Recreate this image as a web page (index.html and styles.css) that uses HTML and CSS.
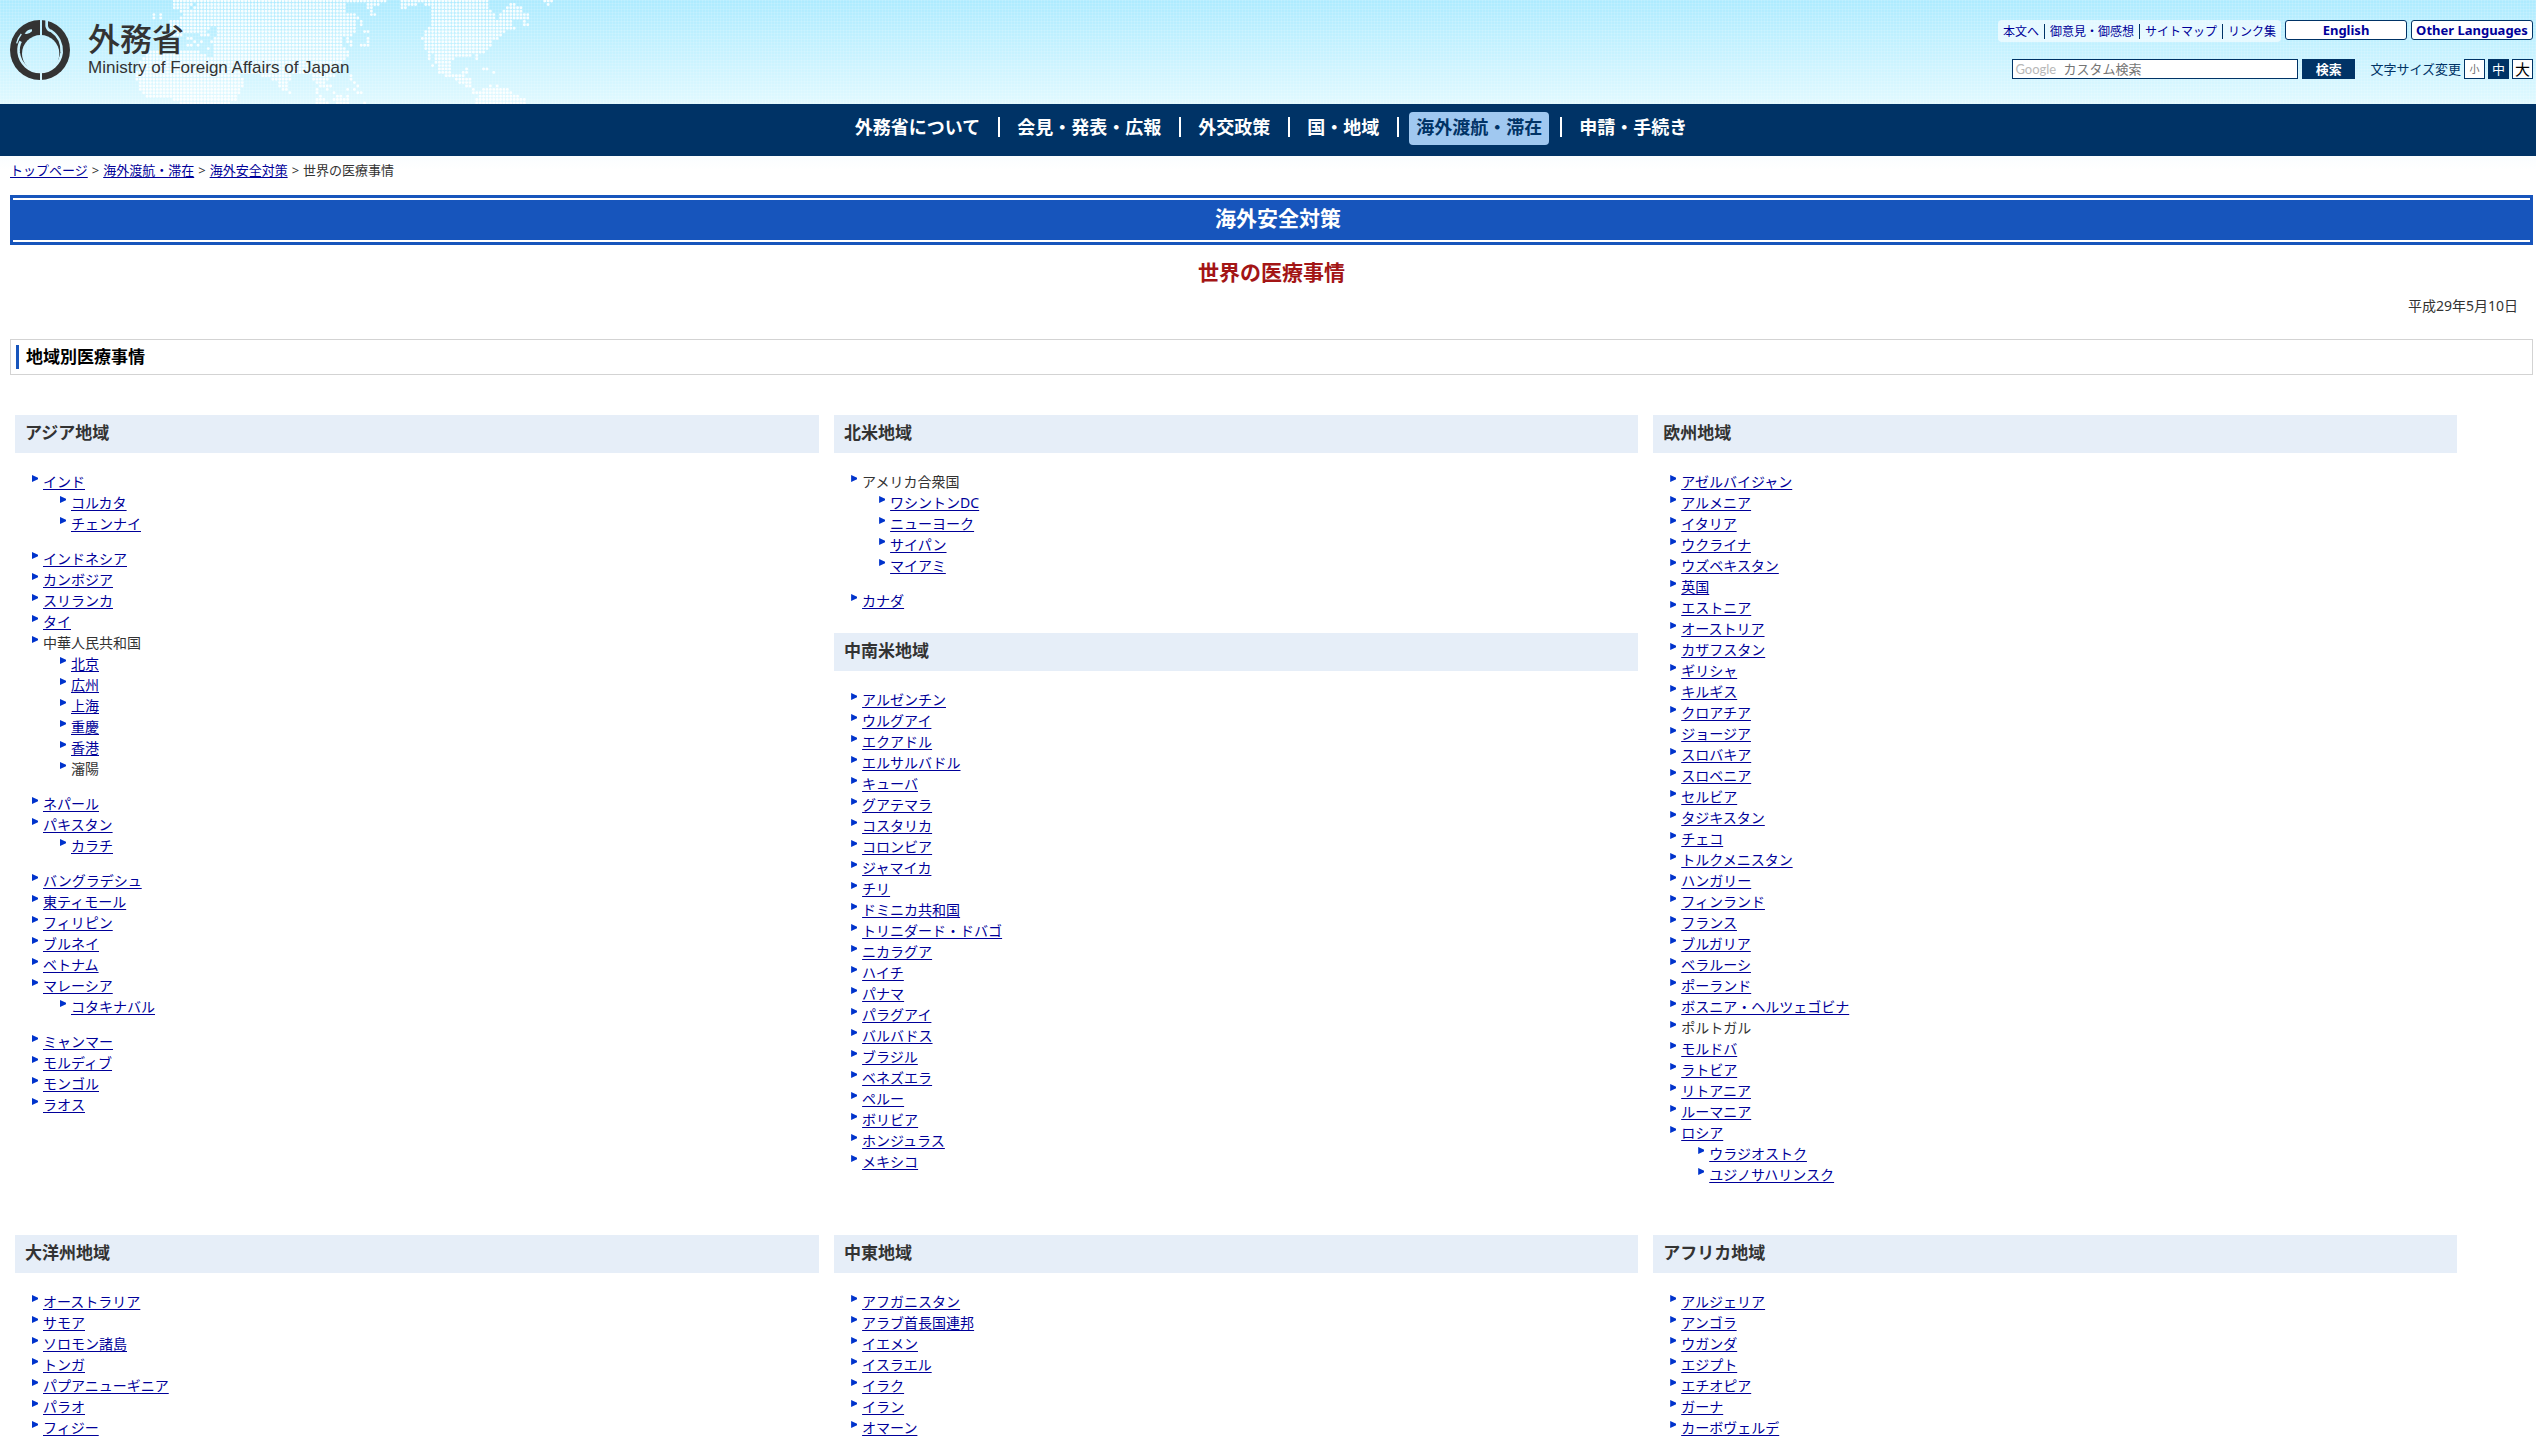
FILE: index.html
```html
<!DOCTYPE html>
<html lang="ja">
<head>
<meta charset="utf-8">
<title>世界の医療事情 | 外務省</title>
<link rel="stylesheet" href="styles.css">
</head>
<body>
<header class="site-header">
  <svg class="map" width="440" height="104" viewBox="0 0 129.4 30.6" aria-hidden="true">
    <path d="M13 .3H75.1M80 .3H105.1M122 .3H124.1
M13 1.3H18.1M20 1.3H63.1M70 1.3H73.1M80 1.3H84.1M87 1.3H105.1M112 1.3H113.1M123 1.3h.1
M13 2.3H17.1M19 2.3H63.1M70 2.3H71.1M80 2.3H81.1M89 2.3H105.1M111 2.3H115.1
M15 3.3H17.1M18 3.3H63.1M71 3.3h.1M89 3.3H106.1M110 3.3H115.1
M7 4.3h.1M9 4.3h.1M16 4.3H66.1M71 4.3H72.1M89 4.3H107.1M109 4.3H117.1
M7 5.3h.1M9 5.3h.1M15 5.3H67.1M89 5.3H107.1M109 5.3H117.1
M12 6.3H66.1M68 6.3h.1M89 6.3H112.1M116 6.3h.1
M12 7.3H66.1M68 7.3h.1M89 7.3H112.1M116 7.3H117.1
M12 8.3H23.1M26 8.3H66.1M88 8.3H113.1
M13 9.3H22.1M26 9.3H66.1M69 9.3H70.1M87 9.3H110.1
M12 10.3H15.1M21 10.3H23.1M26 10.3H65.1M87 10.3H109.1
M17 11.3H18.1M25 11.3H62.1M64 11.3h.1M70 11.3h.1M86 11.3H108.1
M19 12.3h.1M21 12.3h.1M24 12.3H62.1M64 12.3H65.1M70 12.3h.1M87 12.3H106.1
M17 13.3H18.1M20 13.3h.1M25 13.3H62.1M65 13.3h.1M68 13.3H70.1M87 13.3H106.1
M23 14.3h.1M25 14.3H63.1M87 14.3H105.1
M5 15.3H10.1M12 15.3H20.1M25 15.3H64.1M88 15.3H104.1
M5 16.3H22.1M25 16.3H64.1M88 16.3h.1M90 16.3H100.1M102 16.3h.1
M4 17.3H63.1M88 17.3h.1M90 17.3H95.1M102 17.3h.1
M3 18.3H62.1M90 18.3H94.1
M3 19.3H61.1M89 19.3h.1M91 19.3H94.1
M3 20.3H60.1M91 20.3H94.1M99 20.3h.1M104 20.3H105.1
M2 21.3H59.1M91 21.3H94.1M98 21.3H99.1M107 21.3h.1
M2 22.3H32.1M39 22.3H47.1M54 22.3H60.1M65 22.3h.1M93 22.3H98.1
M2 23.3H33.1M42 23.3H47.1M54 23.3H58.1M65 23.3h.1M96 23.3H100.1
M3 24.3H33.1M44 24.3H46.1M55 24.3H57.1M66 24.3h.1M97 24.3H100.1
M3 25.3H33.1M44 25.3H46.1M56 25.3H59.1M67 25.3h.1M99 25.3H100.1M106 25.3h.1M108 25.3h.1
M3 26.3H32.1M45 26.3H46.1M55 26.3h.1M58 26.3h.1M64 26.3h.1M66 26.3h.1M101 26.3h.1M104 26.3H111.1
M4 27.3H32.1M47 27.3h.1M55 27.3h.1M60 27.3h.1M67 27.3H68.1M101 27.3H112.1
M5 28.3H31.1M56 28.3h.1M61 28.3H62.1M64 28.3h.1M103 28.3H114.1
M13 29.3H31.1M55 29.3H57.1M60 29.3H64.1M102 29.3H116.1
M15 30.3H29.1M55 30.3H58.1M61 30.3H64.1M69 30.3h.1M102 30.3H116.1"/>
  </svg>
  <a class="brand" href="#">
    <svg class="emblem" width="60" height="60" viewBox="0 0 180 180" aria-hidden="true">
      <mask id="cut">
        <rect width="180" height="180" fill="#fff"/>
        <circle cx="92" cy="101" r="56"/>
        <path d="M93 0V180" stroke="#000" stroke-width="6"/>
        <path d="M110 0V18Q112 30 124 33A67 71 0 0 1 155 98A65 66 0 0 1 26 98Q24 78 32 64" fill="none" stroke="#000" stroke-width="8"/>
        <path d="M44 41Q52 28 66 28L66 34Q58 42 50 42Z"/>
        <path d="M20 70Q25 52 34 42" fill="none" stroke="#000" stroke-width="4"/>
      </mask>
      <circle cx="90" cy="90" r="90" fill="#333" mask="url(#cut)"/>
    </svg>
    <span class="brand-names">
      <span class="brand-ja">外務省</span>
      <span class="brand-en">Ministry of Foreign Affairs of Japan</span>
    </span>
  </a>
  <div class="tools">
    <div class="tool-row">
      <ul class="quick-links">
        <li><a href="#main">本文へ</a></li>
        <li><a href="#">御意見・御感想</a></li>
        <li><a href="#">サイトマップ</a></li>
        <li><a href="#">リンク集</a></li>
      </ul>
      <a class="lang" href="#">English</a>
      <a class="lang" href="#">Other Languages</a>
    </div>
    <div class="tool-row tool-row-search">
      <form class="search">
        <span class="search-box">
          <input class="search-input" type="text" placeholder="カスタム検索" aria-label="カスタム検索">
          <span class="search-mark" aria-hidden="true">Google</span>
        </span>
        <button class="search-button" type="submit">検索</button>
      </form>
      <span class="size-label">文字サイズ変更</span>
      <button class="size size-small" type="button">小</button>
      <button class="size size-medium" type="button">中</button>
      <button class="size size-large" type="button">大</button>
    </div>
  </div>
</header>
<nav class="main-nav">
  <ul class="nav-list">
    <li><a href="#">外務省について</a></li>
    <li><a href="#">会見・発表・広報</a></li>
    <li><a href="#">外交政策</a></li>
    <li><a href="#">国・地域</a></li>
    <li><a class="current" href="#">海外渡航・滞在</a></li>
    <li><a href="#">申請・手続き</a></li>
  </ul>
</nav>
<main class="page" id="main">
  <div class="breadcrumb"><a href="#">トップページ</a><span>&gt;</span><a href="#">海外渡航・滞在</a><span>&gt;</span><a href="#">海外安全対策</a><span>&gt;</span>世界の医療事情</div>
  <div class="banner"><p class="banner-text">海外安全対策</p></div>
  <h1 class="title">世界の医療事情</h1>
  <p class="date">平成29年5月10日</p>
  <h2 class="section-title"><span>地域別医療事情</span></h2>
  <div class="regions">
    <section>
      <h3 class="region-title">アジア地域</h3>
      <ul class="places">
        <li><a href="#">インド</a>
          <ul><li><a href="#">コルカタ</a></li><li><a href="#">チェンナイ</a></li></ul></li>
        <li><a href="#">インドネシア</a></li>
        <li><a href="#">カンボジア</a></li>
        <li><a href="#">スリランカ</a></li>
        <li><a href="#">タイ</a></li>
        <li>中華人民共和国
          <ul><li><a href="#">北京</a></li><li><a href="#">広州</a></li><li><a href="#">上海</a></li><li><a href="#">重慶</a></li><li><a href="#">香港</a></li><li>瀋陽</li></ul></li>
        <li><a href="#">ネパール</a></li>
        <li><a href="#">パキスタン</a>
          <ul><li><a href="#">カラチ</a></li></ul></li>
        <li><a href="#">バングラデシュ</a></li>
        <li><a href="#">東ティモール</a></li>
        <li><a href="#">フィリピン</a></li>
        <li><a href="#">ブルネイ</a></li>
        <li><a href="#">ベトナム</a></li>
        <li><a href="#">マレーシア</a>
          <ul><li><a href="#">コタキナバル</a></li></ul></li>
        <li><a href="#">ミャンマー</a></li>
        <li><a href="#">モルディブ</a></li>
        <li><a href="#">モンゴル</a></li>
        <li><a href="#">ラオス</a></li>
      </ul>
    </section>
    <div>
      <section>
        <h3 class="region-title">北米地域</h3>
        <ul class="places">
          <li>アメリカ合衆国
            <ul><li><a href="#">ワシントンDC</a></li><li><a href="#">ニューヨーク</a></li><li><a href="#">サイパン</a></li><li><a href="#">マイアミ</a></li></ul></li>
          <li><a href="#">カナダ</a></li>
        </ul>
      </section>
      <section>
        <h3 class="region-title">中南米地域</h3>
        <ul class="places">
          <li><a href="#">アルゼンチン</a></li>
          <li><a href="#">ウルグアイ</a></li>
          <li><a href="#">エクアドル</a></li>
          <li><a href="#">エルサルバドル</a></li>
          <li><a href="#">キューバ</a></li>
          <li><a href="#">グアテマラ</a></li>
          <li><a href="#">コスタリカ</a></li>
          <li><a href="#">コロンビア</a></li>
          <li><a href="#">ジャマイカ</a></li>
          <li><a href="#">チリ</a></li>
          <li><a href="#">ドミニカ共和国</a></li>
          <li><a href="#">トリニダード・ドバゴ</a></li>
          <li><a href="#">ニカラグア</a></li>
          <li><a href="#">ハイチ</a></li>
          <li><a href="#">パナマ</a></li>
          <li><a href="#">パラグアイ</a></li>
          <li><a href="#">バルバドス</a></li>
          <li><a href="#">ブラジル</a></li>
          <li><a href="#">ベネズエラ</a></li>
          <li><a href="#">ペルー</a></li>
          <li><a href="#">ボリビア</a></li>
          <li><a href="#">ホンジュラス</a></li>
          <li><a href="#">メキシコ</a></li>
        </ul>
      </section>
    </div>
    <section>
      <h3 class="region-title">欧州地域</h3>
      <ul class="places">
        <li><a href="#">アゼルバイジャン</a></li>
        <li><a href="#">アルメニア</a></li>
        <li><a href="#">イタリア</a></li>
        <li><a href="#">ウクライナ</a></li>
        <li><a href="#">ウズベキスタン</a></li>
        <li><a href="#">英国</a></li>
        <li><a href="#">エストニア</a></li>
        <li><a href="#">オーストリア</a></li>
        <li><a href="#">カザフスタン</a></li>
        <li><a href="#">ギリシャ</a></li>
        <li><a href="#">キルギス</a></li>
        <li><a href="#">クロアチア</a></li>
        <li><a href="#">ジョージア</a></li>
        <li><a href="#">スロバキア</a></li>
        <li><a href="#">スロベニア</a></li>
        <li><a href="#">セルビア</a></li>
        <li><a href="#">タジキスタン</a></li>
        <li><a href="#">チェコ</a></li>
        <li><a href="#">トルクメニスタン</a></li>
        <li><a href="#">ハンガリー</a></li>
        <li><a href="#">フィンランド</a></li>
        <li><a href="#">フランス</a></li>
        <li><a href="#">ブルガリア</a></li>
        <li><a href="#">ベラルーシ</a></li>
        <li><a href="#">ポーランド</a></li>
        <li><a href="#">ボスニア・ヘルツェゴビナ</a></li>
        <li>ポルトガル</li>
        <li><a href="#">モルドバ</a></li>
        <li><a href="#">ラトビア</a></li>
        <li><a href="#">リトアニア</a></li>
        <li><a href="#">ルーマニア</a></li>
        <li><a href="#">ロシア</a>
          <ul><li><a href="#">ウラジオストク</a></li><li><a href="#">ユジノサハリンスク</a></li></ul></li>
      </ul>
    </section>
    <section>
      <h3 class="region-title">大洋州地域</h3>
      <ul class="places">
        <li><a href="#">オーストラリア</a></li>
        <li><a href="#">サモア</a></li>
        <li><a href="#">ソロモン諸島</a></li>
        <li><a href="#">トンガ</a></li>
        <li><a href="#">パプアニューギニア</a></li>
        <li><a href="#">パラオ</a></li>
        <li><a href="#">フィジー</a></li>
      </ul>
    </section>
    <section>
      <h3 class="region-title">中東地域</h3>
      <ul class="places">
        <li><a href="#">アフガニスタン</a></li>
        <li><a href="#">アラブ首長国連邦</a></li>
        <li><a href="#">イエメン</a></li>
        <li><a href="#">イスラエル</a></li>
        <li><a href="#">イラク</a></li>
        <li><a href="#">イラン</a></li>
        <li><a href="#">オマーン</a></li>
      </ul>
    </section>
    <section>
      <h3 class="region-title">アフリカ地域</h3>
      <ul class="places">
        <li><a href="#">アルジェリア</a></li>
        <li><a href="#">アンゴラ</a></li>
        <li><a href="#">ウガンダ</a></li>
        <li><a href="#">エジプト</a></li>
        <li><a href="#">エチオピア</a></li>
        <li><a href="#">ガーナ</a></li>
        <li><a href="#">カーボヴェルデ</a></li>
      </ul>
    </section>
  </div>
</main>
</body>
</html>
```
FILE: styles.css
```css
* { box-sizing: border-box; }
body {
  margin: 0;
  background: #fff;
  color: #333;
  font: 14px/21px "Noto Sans", "Noto Sans CJK JP", sans-serif;
}
ul, h1, h2, h3, p { margin: 0; padding: 0; }
ul { list-style: none; }
a {
  color: #009;
  text-decoration-thickness: 1px;
  text-underline-offset: 2px;
}
button, input { font-family: inherit; }

/* Header */
.site-header {
  position: relative;
  display: flex;
  justify-content: space-between;
  align-items: flex-start;
  height: 104px;
  padding: 20px 3px 0 10px;
  overflow: hidden;
  background:
    repeating-linear-gradient(rgba(255, 255, 255, .12) 0 1px, transparent 1px 3px),
    repeating-linear-gradient(90deg, rgba(255, 255, 255, .12) 0 1px, transparent 1px 3px),
    linear-gradient(#adebff, #e0f9ff);
}
.map {
  position: absolute;
  top: 0;
  left: 130px;
}
.map path {
  fill: none;
  stroke: #fff;
  stroke-opacity: .9;
  stroke-width: .86;
  stroke-linecap: round;
  stroke-dasharray: 0 1;
}
.brand {
  position: relative;
  display: flex;
  gap: 18px;
  color: #333;
  text-decoration: none;
}
.brand-names { display: flex; flex-direction: column; }
.brand-ja { font-size: 32px; line-height: 38px; font-weight: 500; }
.brand-en { font: 17px/20px "Liberation Sans", sans-serif; }

.tools { position: relative; display: flex; flex-direction: column; align-items: flex-end; gap: 17px; }
.tool-row { display: flex; align-items: flex-start; gap: 4px; }
.tool-row-search { gap: 3px; }
.quick-links {
  display: flex;
  align-items: center;
  height: 22px;
  border-radius: 4px;
  background: rgba(255, 255, 255, .6);
  font-size: 12px;
  line-height: 15px;
}
.quick-links li { padding: 0 5px; }
.quick-links li + li { border-left: 1px solid #036; }
.quick-links a { text-decoration: none; }
.lang {
  width: 122px;
  height: 20px;
  border: 1px solid #036;
  border-radius: 3px;
  background: #fff;
  font-size: 13px;
  line-height: 18px;
  font-weight: 700;
  text-align: center;
  text-decoration: none;
}
.search { display: flex; gap: 4px; margin-right: 12px; }
.search-box { position: relative; display: flex; }
.search-input {
  width: 286px;
  height: 20px;
  padding: 0 0 0 50px;
  border: 1px solid #036;
  background: #fff;
  font-size: 13px;
}
.search-input::placeholder { color: #757575; }
.search-mark {
  position: absolute;
  top: 0;
  left: 3px;
  color: #b8b8b8;
  font: 13px/20px Lato, sans-serif;
}
.search-button {
  width: 53px;
  height: 20px;
  padding: 0;
  border: 0;
  background: #036;
  color: #fff;
  font-size: 13px;
  line-height: 20px;
  font-weight: 700;
}
.size-label { color: #036; font-size: 13px; line-height: 20px; }
.size {
  width: 21px;
  height: 20px;
  padding: 0;
  border: 1px solid #036;
  background: #fff;
  color: #000;
  line-height: 16px;
}
.size-small { color: #666; font-size: 10px; }
.size-medium { background: #036; color: #fff; font-size: 13px; }
.size-large { font-size: 15px; }

/* Global navigation */
.main-nav { padding: 8px 0 11px; background: #036; }
.nav-list { display: flex; justify-content: center; padding-left: 6px; }
.nav-list li { display: flex; align-items: center; }
.nav-list li + li::before {
  content: "";
  width: 2px;
  height: 20px;
  margin: 0 10px 3px 11px;
  background: #fff;
}
.nav-list a {
  padding: 0 7px 2px;
  border-radius: 4px;
  color: #fff;
  font-size: 18px;
  line-height: 31px;
  font-weight: 700;
  text-decoration: none;
}
.nav-list .current { background: #a0c8f0; color: #036; }

/* Page body */
.page {
  padding: 0 3px 0 10px;
  background: linear-gradient(#fafdff, #fff 14px);
}
.breadcrumb { padding: 4px 0 15px; font-size: 13px; line-height: 20px; }
.breadcrumb span { margin: 0 4px; }
.banner { padding: 3px; background: #1755bc; }
.banner-text {
  padding: 0 0 4px 13px;
  border: solid #fff;
  border-width: 2px 0;
  color: #fff;
  font-size: 21px;
  line-height: 36px;
  font-weight: 700;
  text-align: center;
}
.title {
  padding-top: 12px;
  color: #a31515;
  font-size: 21px;
  line-height: 30px;
  text-align: center;
}
.date { padding: 8px 15px 0 0; text-align: right; }
.section-title {
  margin-top: 23px;
  padding: 5px;
  border: 1px solid #d3d3d3;
  color: #000;
  font-size: 17px;
  line-height: 24px;
}
.section-title span { display: block; padding-left: 7px; border-left: 3px solid #1755bc; }
.regions {
  display: grid;
  grid-template-columns: repeat(3, 1fr);
  gap: 14px 15px;
  padding: 40px 3% 0 5px;
}
.region-title {
  padding: 0 10px 2px;
  background: #e6eef8;
  font-size: 17px;
  line-height: 36px;
}
.places { padding: 18px 0 22px 17px; }
.regions > section:nth-last-child(-n+3) .places { padding-bottom: 0; }
.places li { position: relative; padding-left: 11px; }
.places li::before {
  content: "";
  position: absolute;
  top: 4px;
  left: 0;
  width: 6px;
  height: 7px;
  background: #03c;
  clip-path: polygon(0 0, 100% 40%, 100% 60%, 0 100%);
}
.places ul { padding: 0 0 14px 17px; }
```
